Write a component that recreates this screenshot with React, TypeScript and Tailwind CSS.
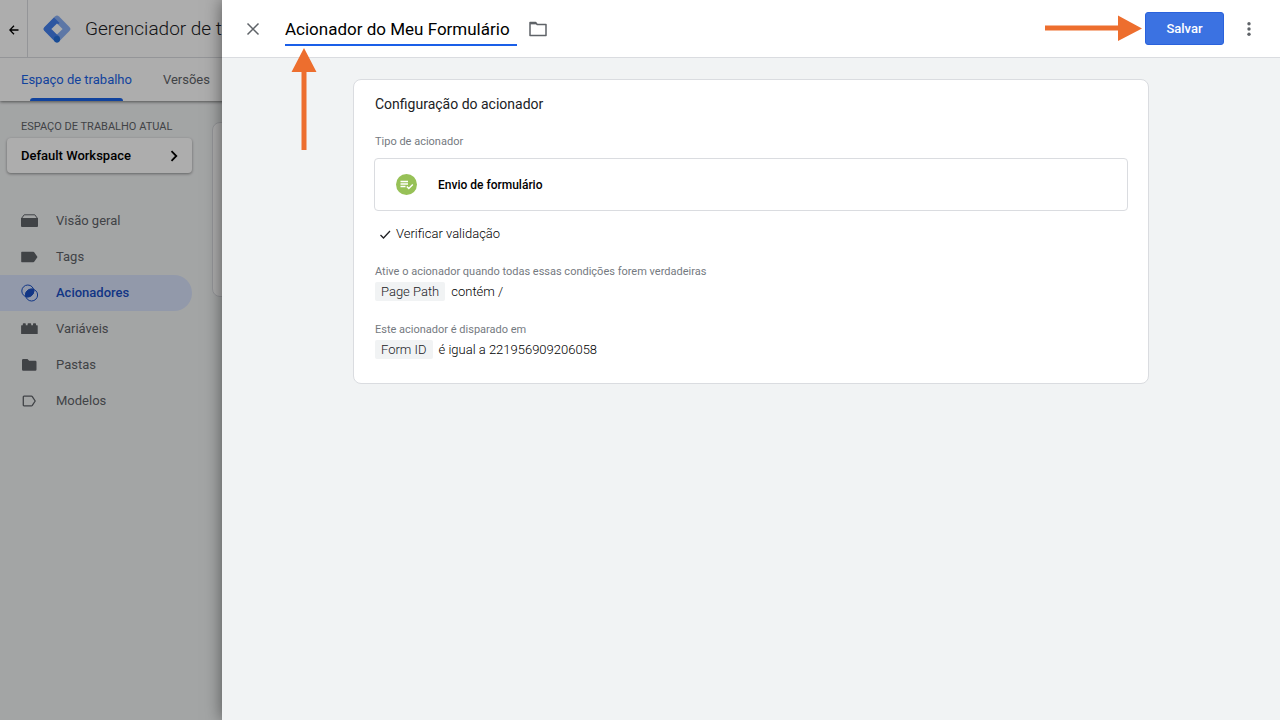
import { useState, type ReactNode } from "react";

type NavItem = { label: string; icon: ReactNode; active?: boolean };

const navItems: NavItem[] = [
  {
    label: "Visão geral",
    icon: (
      <svg width="17" height="14" viewBox="0 0 17 14" fill="currentColor" aria-hidden="true">
        <path d="M0 4h17V12a1 1 0 0 1-1 1H1a1 1 0 0 1-1-1z" />
        <path d="M.8 4 3.200.8h10.600L16.200 4" fill="none" stroke="currentColor" strokeWidth="1" />
      </svg>
    ),
  },
  {
    label: "Tags",
    icon: (
      <svg width="17" height="12" viewBox="0 0 17 12" fill="currentColor" aria-hidden="true">
        <path d="M.8.8h11.400c.5 0 .9.200 1.200.6L16.500 6l-3.100 4.600c-.3.4-.7.6-1.200.6H.8A.6.600 0 0 1 .2 10.600V1.400A.6.600 0 0 1 .8.8z" />
      </svg>
    ),
  },
  {
    label: "Acionadores",
    active: true,
    icon: (
      <svg width="18" height="18" viewBox="0 0 18 18" fill="none" stroke="currentColor" strokeWidth="1" aria-hidden="true">
        <circle cx="6.800" cy="7" r="6" />
        <circle cx="10.600" cy="11" r="6" />
        <path d="M4.700 10C4.900 7 8 4.700 12.700 5.200 13.500 9.500 10.500 12.900 5 12.900 4.700 12 4.600 11 4.700 10z" fill="currentColor" />
      </svg>
    ),
  },
  {
    label: "Variáveis",
    icon: (
      <svg width="17" height="12" viewBox="0 0 17 12" fill="currentColor" aria-hidden="true">
        <path d="M.6 2.200h1.200V1q0-.7.700-.7h1.600q.7 0 .7.700v1.200h1.800V1q0-.7.700-.7h2.200q.7 0 .7.700v1.200H12V1q0-.7.700-.7h1.600q.7 0 .7.700v1.200h1.200q.5 0 .5.500v7.800q0 .5-.5.500H.6q-.5 0-.5-.5V2.700q0-.5.5-.5z" />
      </svg>
    ),
  },
  {
    label: "Pastas",
    icon: (
      <svg width="17" height="14" viewBox="0 0 17 14" fill="currentColor" aria-hidden="true">
        <path d="M2.200 1h4.300l1.600 1.800h6.200q1.200 0 1.200 1.200v7.600q0 1.200-1.200 1.200H2.200Q1 12.800 1 11.600V2.200Q1 1 2.200 1z" />
      </svg>
    ),
  },
  {
    label: "Modelos",
    icon: (
      <svg width="17" height="14" viewBox="0 0 17 14" fill="none" stroke="currentColor" strokeWidth="1.300" strokeLinejoin="round" aria-hidden="true">
        <path d="M3 2.200h7.400q.6 0 .9.400L14.200 7l-2.900 4.400q-.3.4-.9.400H3q-.7 0-.7-.7V2.900q0-.7.700-.7z" />
      </svg>
    ),
  },
];

function Logo() {
  return (
    <svg width="28" height="28" viewBox="0 0 28 28" aria-hidden="true">
      <path d="M11.900 1.500a3 3 0 0 1 4.200 0L26.400 11.900a3 3 0 0 1 0 4.200L16.100 26.500a3 3 0 0 1-4.200 0L1.600 16.100a3 3 0 0 1 0-4.200z" fill="#8ab0f5" />
      <path d="M11 2.400 16.600 8 8.500 14l7.800 7.500-.2 5a3 3 0 0 1-4.200 0L1.600 16.100a3 3 0 0 1 0-4.200z" fill="#4480ee" />
      <path d="m14 8.400 5.600 5.600-5.600 5.600L8.400 14z" fill="#fff" />
      <circle cx="14" cy="24.200" r="3.100" fill="#246fdb" />
    </svg>
  );
}

function Workspace() {
  return (
    <div className="flex min-h-screen flex-col bg-[#f1f3f4]">
      <header className="bg-white shadow-[0_1px_3px_rgba(0,0,0,0.5)]">
        <div className="flex h-[58px] items-center border-b border-[#dadce0]">
          <button aria-label="Voltar" className="flex h-full w-7 items-center justify-center border-r border-[#dadce0] pt-0.5">
            <svg width="10" height="10" viewBox="0 0 10 10" fill="none" stroke="#000" strokeWidth="1.300" aria-hidden="true">
              <path d="M9.500 5H1M5 .8.800 5 5 9.200" />
            </svg>
          </button>
          <div className="ml-[15px] flex items-center gap-[14px]">
            <Logo />
            <span className="text-[19px] leading-7 font-light whitespace-nowrap text-[#202124]">Gerenciador de tags</span>
          </div>
        </div>
        <nav className="flex h-[43px] gap-[31px] pl-[21px] text-[13px]">
          <a href="#espaco" className="relative flex items-center text-[#1a63e8]">
            Espaço de trabalho
            <span className="absolute inset-x-[9px] bottom-0 h-[3px] rounded-t bg-[#1a63e8]" />
          </a>
          <a href="#versoes" className="flex items-center text-[#5f6368]">Versões</a>
        </nav>
      </header>
      <div className="flex grow">
        <aside className="w-48 shrink-0 pt-[18px]">
          <p className="pl-[21px] text-[11px] leading-4 text-[#5f6368]">ESPAÇO DE TRABALHO ATUAL</p>
          <button className="mt-[3px] ml-[7px] flex h-[35px] w-[185px] items-center justify-between rounded bg-white px-[14px] text-[13px] font-medium shadow-[0_1px_3px_rgba(0,0,0,0.4)]">
            Default Workspace
            <svg width="8" height="12" viewBox="0 0 8 12" fill="none" stroke="#000" strokeWidth="1.800" aria-hidden="true">
              <path d="m1.500 1.200 4.800 4.800-4.800 4.800" />
            </svg>
          </button>
          <nav className="mt-[30px] text-[13px]">
            {navItems.map((item) => (
              <a
                key={item.label}
                href="#nav"
                className={
                  item.active
                    ? "flex h-9 items-center gap-[17px] rounded-r-full bg-[#d7e2fb] pl-[21px] font-medium text-[#1a4fc4]"
                    : "flex h-9 items-center gap-[17px] pl-[21px] text-[#5f6368]"
                }
              >
                <span className="flex w-[18px]">{item.icon}</span>
                {item.label}
              </a>
            ))}
          </nav>
        </aside>
        <main className="grow pt-[21px] pl-5">
          <div className="h-[175px] rounded-lg border border-[#dadce0] bg-white" />
        </main>
      </div>
    </div>
  );
}

function Condition({ title, variable, rule }: { title: string; variable: string; rule: string }) {
  return (
    <section>
      <h3 className="text-[11px] leading-4 text-[#757a7f]">{title}</h3>
      <p className="mt-0.5 flex items-center gap-1.5 text-[13px] leading-[19px] font-light text-black">
        <span className="rounded-xs bg-[#f1f3f4] px-1.5 text-[#202124]">{variable}</span>
        <span>{rule}</span>
      </p>
    </section>
  );
}

function TriggerDrawer() {
  const [name, setName] = useState("Acionador do Meu Formulário");
  return (
    <section aria-label="Acionador" className="absolute inset-y-0 right-0 left-[222px] flex flex-col bg-[#f1f3f4] shadow-[0_0_16px_rgba(0,0,0,0.5)]">
      <header className="flex h-[58px] shrink-0 items-center border-b border-[#dadce0] bg-white pr-[27px] pl-6">
        <button aria-label="Fechar" className="flex size-[14px] items-center justify-center">
          <svg width="14" height="14" viewBox="0 0 14 14" fill="none" stroke="#5f6368" strokeWidth="1.500" aria-hidden="true">
            <path d="m1.500 1.500 11 11m0-11-11 11" />
          </svg>
        </button>
        <input
          aria-label="Nome do acionador"
          value={name}
          onChange={(event) => setName(event.target.value)}
          className="mt-0.5 ml-[25px] h-8 w-[232px] border-b-2 border-[#1a5fe8] text-[17px] text-black outline-none"
        />
        <button aria-label="Pasta" className="ml-3">
          <svg width="18" height="16" viewBox="0 0 18 16" fill="none" stroke="#5f6368" strokeWidth="1.500" strokeLinejoin="round" aria-hidden="true">
            <path d="M1 1.500h5.600l1.600 2H17v11H1z" />
            <path d="M1 2.600h6.500" />
          </svg>
        </button>
        <button className="ml-auto h-[33px] w-[79px] rounded-[3px] border border-[#2a62dc] bg-[#3b72e2] text-[13px] font-medium text-white">Salvar</button>
        <button aria-label="Mais opções" className="ml-[21px] flex w-2 justify-center">
          <svg width="4" height="16" viewBox="0 0 4 16" fill="#5f6368" aria-hidden="true">
            <circle cx="2" cy="2.700" r="1.700" />
            <circle cx="2" cy="8" r="1.700" />
            <circle cx="2" cy="13.300" r="1.700" />
          </svg>
        </button>
      </header>
      <main className="px-5 pt-[21px]">
        <article className="mx-auto max-w-[796px] rounded-lg border border-[#dadce0] bg-white px-5 pt-3 pb-6">
          <h1 className="px-px text-[14px] leading-6 text-[#202124]">Configuração do acionador</h1>
          <h2 className="mt-[18px] px-px text-[11px] leading-4 text-[#757a7f]">Tipo de acionador</h2>
          <button className="mt-2 flex h-[53px] w-full items-center gap-[21px] rounded border border-[#dadce0] px-[21px] text-[12px] font-medium text-black">
            <svg width="21" height="21" viewBox="0 0 21 21" aria-hidden="true">
              <circle cx="10.500" cy="10.500" r="10.500" fill="#97c157" />
              <path d="M4.500 7.500h7.500M4.500 10h7.500M4.500 12.500h5" stroke="#fff" strokeWidth="1.300" />
              <path d="m10.800 12.500 2 2 4-4" fill="none" stroke="#fff" strokeWidth="1.400" />
            </svg>
            Envio de formulário
          </button>
          <div className="px-px">
            <p className="mt-[13px] flex items-center gap-1 pl-1 text-[13px] leading-5 font-light text-black">
              <svg width="13" height="12" viewBox="0 0 13 12" fill="none" stroke="#202124" strokeWidth="1.300" aria-hidden="true">
                <path d="m1.500 7 3 3L11 3" />
              </svg>
              Verificar validação
            </p>
            <div className="mt-5 flex flex-col gap-[21px]">
              <Condition title="Ative o acionador quando todas essas condições forem verdadeiras" variable="Page Path" rule="contém /" />
              <Condition title="Este acionador é disparado em" variable="Form ID" rule="é igual a 221956909206058" />
            </div>
          </div>
        </article>
      </main>
    </section>
  );
}

export default function App() {
  return (
    <div className="relative min-h-screen overflow-hidden font-['Roboto','Liberation_Sans',sans-serif]">
      <Workspace />
      <div className="absolute inset-0 bg-black/32" />
      <TriggerDrawer />
      <svg className="absolute top-[47px] left-[291px]" width="26" height="104" viewBox="0 0 26 104" fill="#ed6e2e" aria-hidden="true">
        <path d="M13 1 25.500 25H15.500v78h-5V25H.5z" />
      </svg>
      <svg className="absolute top-[15px] right-[137px]" width="98" height="26" viewBox="0 0 98 26" fill="#ed6e2e" aria-hidden="true">
        <path d="M97 13.500 73 26V15.500H0v-5h73V.5z" />
      </svg>
    </div>
  );
}
